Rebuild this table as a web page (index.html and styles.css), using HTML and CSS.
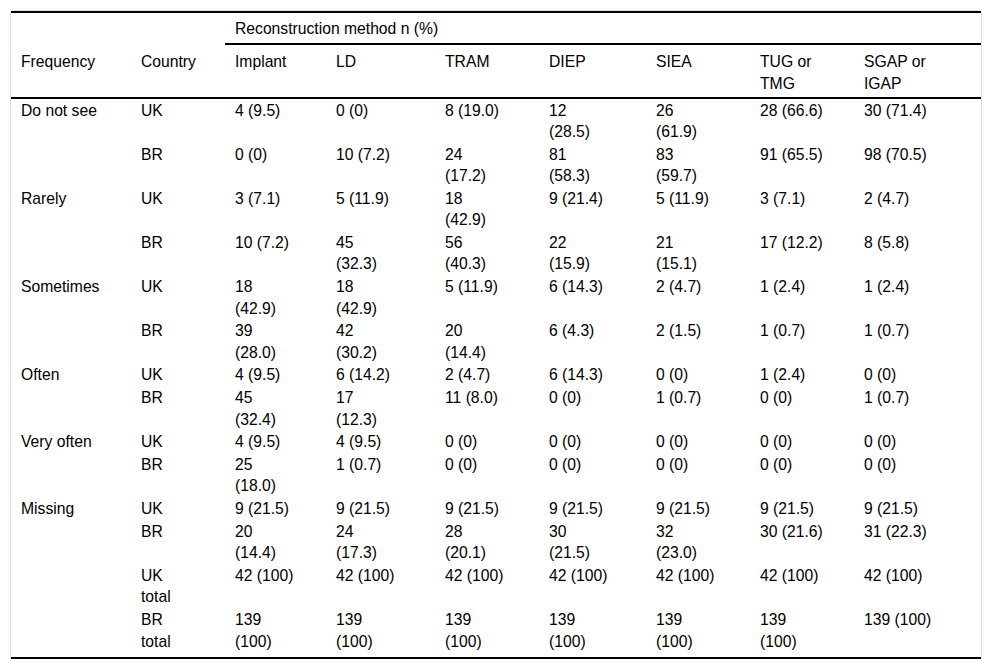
FILE: index.html
```html
<!DOCTYPE html>
<html lang="en">
<head>
<meta charset="utf-8">
<title>Reconstruction method table</title>
<link rel="stylesheet" href="styles.css">
</head>
<body>
<div class="table-wrap">
<table class="data">
<colgroup>
<col class="c-freq"><col class="c-country"><col class="c-implant"><col class="c-ld"><col class="c-tram"><col class="c-diep"><col class="c-siea"><col class="c-tug"><col class="c-sgap">
</colgroup>
<thead>
<tr class="head-top">
<th></th><th></th>
<th colspan="7" class="group">Reconstruction method n (%)</th>
</tr>
<tr class="head-sub">
<th>Frequency</th><th>Country</th><th>Implant</th><th>LD</th><th>TRAM</th><th>DIEP</th><th>SIEA</th><th>TUG or TMG</th><th>SGAP or IGAP</th>
</tr>
</thead>
<tbody>
<tr><td>Do not see</td><td>UK</td><td>4 (9.5)</td><td>0 (0)</td><td>8 (19.0)</td><td>12 (28.5)</td><td>26 (61.9)</td><td>28 (66.6)</td><td>30 (71.4)</td></tr>
<tr><td></td><td>BR</td><td>0 (0)</td><td>10 (7.2)</td><td>24 (17.2)</td><td>81 (58.3)</td><td>83 (59.7)</td><td>91 (65.5)</td><td>98 (70.5)</td></tr>
<tr><td>Rarely</td><td>UK</td><td>3 (7.1)</td><td>5 (11.9)</td><td>18 (42.9)</td><td>9 (21.4)</td><td>5 (11.9)</td><td>3 (7.1)</td><td>2 (4.7)</td></tr>
<tr><td></td><td>BR</td><td>10 (7.2)</td><td>45 (32.3)</td><td>56 (40.3)</td><td>22 (15.9)</td><td>21 (15.1)</td><td>17 (12.2)</td><td>8 (5.8)</td></tr>
<tr><td>Sometimes</td><td>UK</td><td>18 (42.9)</td><td>18 (42.9)</td><td>5 (11.9)</td><td>6 (14.3)</td><td>2 (4.7)</td><td>1 (2.4)</td><td>1 (2.4)</td></tr>
<tr><td></td><td>BR</td><td>39 (28.0)</td><td>42 (30.2)</td><td>20 (14.4)</td><td>6 (4.3)</td><td>2 (1.5)</td><td>1 (0.7)</td><td>1 (0.7)</td></tr>
<tr><td>Often</td><td>UK</td><td>4 (9.5)</td><td>6 (14.2)</td><td>2 (4.7)</td><td>6 (14.3)</td><td>0 (0)</td><td>1 (2.4)</td><td>0 (0)</td></tr>
<tr><td></td><td>BR</td><td>45 (32.4)</td><td>17 (12.3)</td><td>11 (8.0)</td><td>0 (0)</td><td>1 (0.7)</td><td>0 (0)</td><td>1 (0.7)</td></tr>
<tr><td>Very often</td><td>UK</td><td>4 (9.5)</td><td>4 (9.5)</td><td>0 (0)</td><td>0 (0)</td><td>0 (0)</td><td>0 (0)</td><td>0 (0)</td></tr>
<tr><td></td><td>BR</td><td>25 (18.0)</td><td>1 (0.7)</td><td>0 (0)</td><td>0 (0)</td><td>0 (0)</td><td>0 (0)</td><td>0 (0)</td></tr>
<tr><td>Missing</td><td>UK</td><td>9 (21.5)</td><td>9 (21.5)</td><td>9 (21.5)</td><td>9 (21.5)</td><td>9 (21.5)</td><td>9 (21.5)</td><td>9 (21.5)</td></tr>
<tr><td></td><td>BR</td><td>20 (14.4)</td><td>24 (17.3)</td><td>28 (20.1)</td><td>30 (21.5)</td><td>32 (23.0)</td><td>30 (21.6)</td><td>31 (22.3)</td></tr>
<tr><td></td><td>UK total</td><td>42 (100)</td><td>42 (100)</td><td>42 (100)</td><td>42 (100)</td><td>42 (100)</td><td>42 (100)</td><td>42 (100)</td></tr>
<tr class="last"><td></td><td>BR total</td><td>139 (100)</td><td>139 (100)</td><td>139 (100)</td><td>139 (100)</td><td>139 (100)</td><td>139 (100)</td><td>139 (100)</td></tr>
</tbody>
</table>
</div>
</body>
</html>
```
FILE: styles.css
```css
html, body {
  background: #fff;
}
body {
  margin: 10px;
  font-family: "Liberation Sans", Arial, sans-serif;
  font-size: 15.7px;
  line-height: 21.3px;
  color: #000;
}
.table-wrap {
  border: 1px solid #e2e2e2;
  border-bottom: none;
}
.data {
  width: 970px;
  table-layout: fixed;
  border-collapse: separate;
  border-spacing: 0;
  border-top: 2px solid #000;
  border-bottom: 2px solid #000;
}
.c-freq { width: 120px; }
.c-country { width: 94px; }
.c-implant { width: 101px; }
.c-ld { width: 109px; }
.c-tram { width: 104px; }
.c-diep { width: 107px; }
.c-siea { width: 104px; }
.c-tug { width: 104px; }
.c-sgap { width: 127px; }

.data th,
.data td {
  text-align: left;
  vertical-align: top;
  font-weight: normal;
  padding: 1px 0 0.5px 10px;
}
.data th:nth-child(2), .data td:nth-child(2) { padding-right: 28.6px; }
.data th:nth-child(3), .data td:nth-child(3) { padding-right: 31px; }
.data th:nth-child(4), .data td:nth-child(4) { padding-right: 39px; }
.data th:nth-child(5), .data td:nth-child(5) { padding-right: 34px; }
.data th:nth-child(6), .data td:nth-child(6) { padding-right: 37px; }
.data th:nth-child(7), .data td:nth-child(7) { padding-right: 34px; }
.data th:nth-child(8), .data td:nth-child(8) { padding-right: 30px; }
.data th:nth-child(9), .data td:nth-child(9) { padding-right: 37px; }

.head-top th {
  padding-top: 5px;
  padding-bottom: 4px;
}
.head-top th.group {
  border-bottom: 2px solid #000;
  padding-right: 0;
}
.head-sub th {
  padding-top: 6px;
  padding-bottom: 3px;
  border-bottom: 2px solid #000;
}
.data tr.last td {
  padding-bottom: 5px;
}
```
